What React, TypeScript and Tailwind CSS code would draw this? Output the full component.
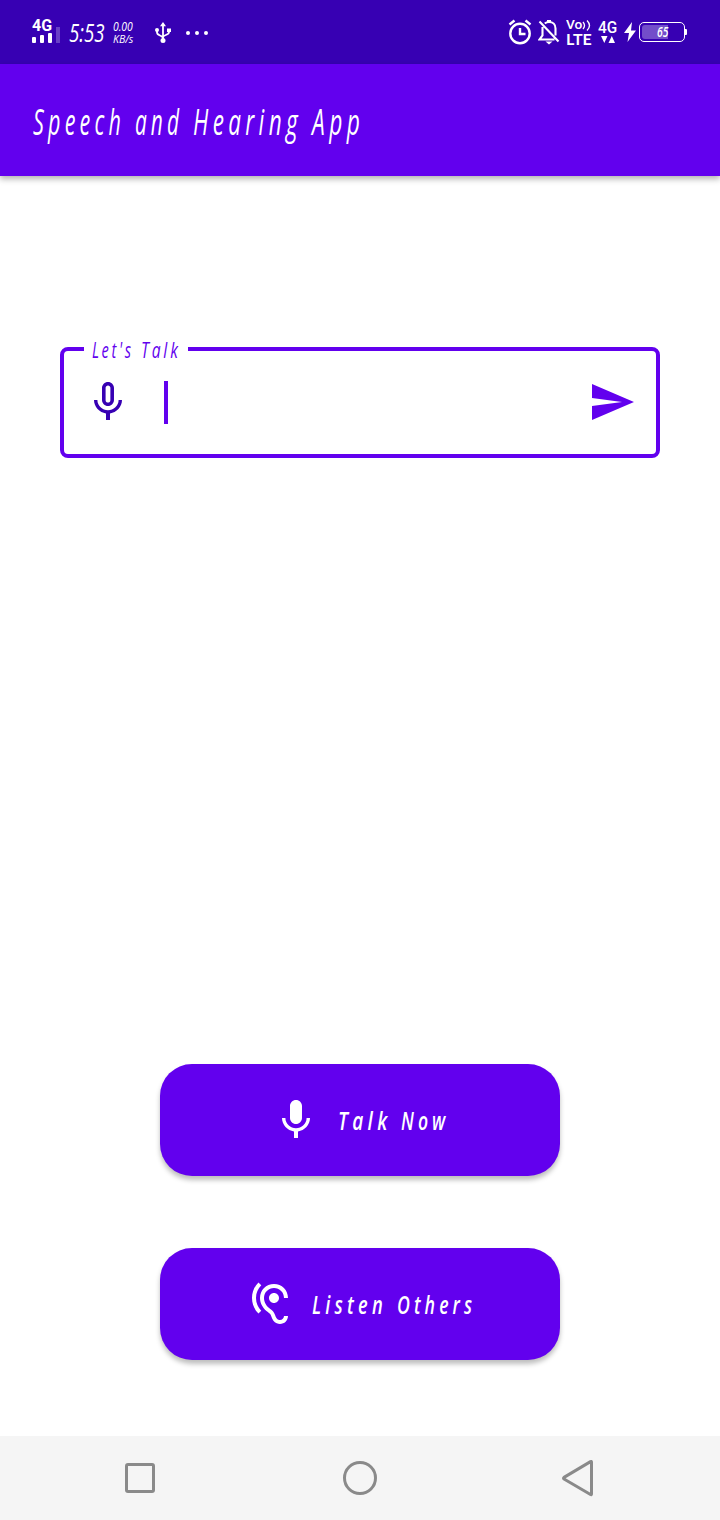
import { useLayoutEffect, useRef } from "react";
import type { ReactNode } from "react";

/** A word condensed horizontally so that it fills exactly the given width. */
function Word({ children, width, className = "" }: { children: string; width: number; className?: string }) {
  const ref = useRef<HTMLSpanElement>(null);
  useLayoutEffect(() => {
    const el = ref.current;
    if (!el) return;
    const spacing = parseFloat(getComputedStyle(el).letterSpacing) || 0;
    el.style.transform = `scaleX(${width / (el.offsetWidth - spacing)})`;
  }, [width]);
  return (
    <span className={`flex shrink-0 ${className}`} style={{ width }}>
      <span ref={ref} className="inline-block shrink-0 origin-left whitespace-nowrap">
        {children}
      </span>
    </span>
  );
}

function Icon({ d, className = "" }: { d: string; className?: string }) {
  return (
    <svg viewBox="0 0 24 24" fill="currentColor" className={`size-12 shrink-0 ${className}`}>
      <path d={d} />
    </svg>
  );
}

const MIC_NONE =
  "M12 14c1.66 0 2.99-1.34 2.99-3L15 5c0-1.66-1.34-3-3-3S9 3.34 9 5v6c0 1.66 1.34 3 3 3zm-1.2-9.1c0-.66.54-1.2 1.2-1.2.66 0 1.2.54 1.2 1.2l-.01 6.2c0 .66-.53 1.2-1.19 1.2-.66 0-1.2-.54-1.2-1.2V4.9zm6.5 6.1c0 3-2.54 5.1-5.3 5.1S6.7 14 6.7 11H5c0 3.41 2.72 6.23 6 6.72V21h2v-3.28c3.28-.48 6-3.3 6-6.72h-1.7z";
const MIC =
  "M12 14c1.66 0 2.99-1.34 2.99-3L15 5c0-1.66-1.34-3-3-3S9 3.34 9 5v6c0 1.66 1.34 3 3 3zm5.3-3c0 3-2.54 5.1-5.3 5.1S6.7 14 6.7 11H5c0 3.41 2.72 6.23 6 6.72V21h2v-3.28c3.28-.48 6-3.3 6-6.72h-1.7z";
const SEND = "M2.01 21L23 12 2.01 3 2 10l15 2-15 2z";
const HEARING =
  "M17 20c-.29 0-.56-.06-.76-.15-.71-.37-1.21-.88-1.71-2.38-.51-1.56-1.47-2.29-2.39-3-.79-.61-1.61-1.24-2.32-2.53C9.29 10.98 9 9.93 9 9c0-2.8 2.2-5 5-5s5 2.2 5 5h2c0-3.93-3.07-7-7-7S7 5.07 7 9c0 1.26.38 2.65 1.07 3.9.91 1.65 1.98 2.48 2.85 3.15.81.62 1.39 1.07 1.71 2.05.6 1.82 1.37 2.84 2.73 3.55.51.23 1.07.35 1.64.35 2.21 0 4-1.79 4-4h-2c0 1.1-.9 2-2 2zM7.64 2.64L6.22 1.22C4.23 3.21 3 5.96 3 9s1.23 5.79 3.22 7.78l1.41-1.41C6.01 13.74 5 11.49 5 9s1.01-4.74 2.64-6.36zM11.5 9c0 1.38 1.12 2.5 2.5 2.5s2.5-1.12 2.5-2.5-1.12-2.5-2.5-2.5-2.5 1.12-2.5 2.5z";

function StatusBar() {
  return (
    <header className="flex h-16 shrink-0 justify-between bg-[#3700b3] pr-[33px] pl-8 text-white">
      <div className="flex">
        <div className="flex w-7 flex-col pt-[18px]">
          <Word width={20} className="h-[15px] font-['Roboto',sans-serif] text-[16px] leading-[15px] font-bold not-italic">4G</Word>
          <div className="mt-[-6px] flex h-4 items-end gap-1">
            <span className="h-[6px] w-1 shrink-0 rounded-[1px] bg-white" />
            <span className="h-2 w-1 shrink-0 rounded-[1px] bg-white" />
            <span className="h-[10px] w-1 shrink-0 rounded-[1px] bg-white" />
            <span className="h-4 w-1 shrink-0 bg-white/25" />
          </div>
        </div>
        <Word width={36} className="ml-[9px] pt-[17px] text-[25px] leading-[30px] font-medium">5:53</Word>
        <div className="ml-2 flex flex-col pt-[20px] text-[12px] leading-[13px]">
          <Word width={20}>0.00</Word>
          <Word width={20} className="text-[10.5px]">KB/s</Word>
        </div>
        <svg viewBox="0 0 18 22" className="mt-[22px] ml-[21px] h-[22px] w-[18px]" fill="none" stroke="#fff" strokeWidth="1.8">
          <path d="M9 3v16M3 9v1.500c0 3.500 6 2.500 6 6M15 8v2c0 3.500-6 2.500-6 5.500" />
          <path d="M9 0l3 4.300H6zM13 6.500h4v3.500h-4z" fill="#fff" stroke="none" />
          <circle cx="3" cy="8" r="2" fill="#fff" stroke="none" />
          <circle cx="9" cy="18.500" r="2.500" fill="#fff" stroke="none" />
        </svg>
        <div className="mt-[31px] ml-[14px] flex gap-[5px]">
          <span className="size-1 rounded-full bg-white" />
          <span className="size-1 rounded-full bg-white" />
          <span className="size-1 rounded-full bg-white" />
        </div>
      </div>
      <div className="flex">
        <svg viewBox="0 0 24 26" className="mt-[19px] h-[26px] w-6" fill="none" stroke="#fff" strokeWidth="2.400">
          <circle cx="12" cy="14.500" r="9.700" />
          <path d="M12 9v6h5.500M1.500 5.500l5-4M22.500 5.500l-5-4" />
        </svg>
        <svg viewBox="0 0 22 26" className="mt-[19px] ml-[6px] h-[26px] w-[22px]" fill="none" stroke="#fff" strokeWidth="2.100">
          <path d="M1.500 2.500l19 20M6.800 4.500c1-.9 2.200-1.500 4.200-1.500 4 0 6.500 2.700 6.500 6.500v7M4.500 8v8.500l-3 4h15" />
          <path d="M7.500 22.500h7l-3.500 3zM9 1h4v2.500H9z" fill="#fff" stroke="none" />
        </svg>
        <div className="ml-[6px] flex flex-col pt-[18px] font-['Roboto',sans-serif] not-italic">
          <div className="flex h-[13px]">
            <Word width={16} className="text-[12px] leading-[14px] font-medium">Vo</Word>
            <svg viewBox="0 0 9 12" className="mt-[2px] h-3 w-[9px]" fill="none" stroke="#fff" strokeWidth="1.300">
              <path d="M1 2q3 3.500 0 7M5 .5q5 5 0 10" />
            </svg>
          </div>
          <Word width={26} className="font-['Lato',sans-serif] text-[16px] leading-[15px] font-bold">LTE</Word>
        </div>
        <div className="ml-[6px] flex flex-col items-center pt-[19px]">
          <Word width={19} className="font-['Roboto',sans-serif] text-[17px] leading-[17px] font-medium not-italic">4G</Word>
          <svg viewBox="0 0 14 7" className="h-[7px] w-[14px]" fill="#fff">
            <path d="M0 0h6.500L3.300 7zM7.500 7H14L10.800 0z" />
          </svg>
        </div>
        <svg viewBox="0 0 12 20" className="mt-[22px] ml-[7px] h-5 w-3" fill="#fff">
          <path d="M8 0L0 11h5L3.500 20 12 8.500H7z" />
        </svg>
        <div className="mt-[22px] ml-[3px] flex h-5 w-[46px] items-center rounded-[5px] border border-white p-[2px]">
          <div className="flex h-[14px] w-[26px] items-center justify-end rounded-l-[3px] bg-white/30">
            <Word width={11} className="text-[14px] leading-[14px] font-semibold">65</Word>
          </div>
        </div>
        <span className="mt-[29px] h-[6px] w-[2px] rounded-r-[1px] bg-white" />
      </div>
    </header>
  );
}

function ActionButton({ icon, className, children }: { icon: string; className: string; children: ReactNode }) {
  return (
    <button
      className={`flex h-28 w-[400px] items-start rounded-[32px] bg-[#6200ee] pt-8 text-[26px] leading-[49px] font-semibold tracking-[6px] text-white shadow-[0_4px_5px_rgba(0,0,0,0.26)] ${className}`}
    >
      <Icon d={icon} />
      {children}
    </button>
  );
}

export default function App() {
  return (
    <div className="flex h-[1520px] w-[720px] flex-col overflow-hidden bg-white font-['Open_Sans','Noto_Sans',sans-serif] italic">
      <StatusBar />
      <div className="flex h-28 shrink-0 gap-[14px] bg-[#6200ee] pt-[33px] pl-[33px] text-[36px] leading-[50px] font-normal tracking-[7px] text-white shadow-[0_3px_6px_rgba(0,0,0,0.3)]">
        <Word width={88}>Speech</Word>
        <Word width={44}>and</Word>
        <Word width={105}>Hearing</Word>
        <Word width={48}>App</Word>
      </div>
      <main className="flex grow flex-col items-center">
        <div className="relative mt-[171px] flex h-[111px] w-[600px] shrink-0 items-start justify-between rounded-[8px] border-4 border-[#6200ee] px-5 pt-[27px]">
          <div className="absolute top-[-18px] left-5 flex h-8 w-[104px] gap-[10px] bg-white pl-2 text-[22px] leading-[32px] font-normal tracking-[4px] text-[#6200ee]">
            <Word width={39}>Let's</Word>
            <Word width={37}>Talk</Word>
          </div>
          <div className="flex">
            <Icon d={MIC_NONE} className="text-[#3700b3]" />
            <span className="mt-[3px] ml-8 h-[43px] w-1 bg-[#6200ee]" />
          </div>
          <Icon d={SEND} className="text-[#6200ee]" />
        </div>
        <div className="mt-[606px] flex flex-col gap-[72px]">
          <ActionButton icon={MIC} className="pl-28">
            <Word width={49} className="ml-[18px]">Talk</Word>
            <Word width={44} className="ml-[14px]">Now</Word>
          </ActionButton>
          <ActionButton icon={HEARING} className="pl-[86px]">
            <Word width={71} className="ml-[18px]">Listen</Word>
            <Word width={75} className="ml-[14px]">Others</Word>
          </ActionButton>
        </div>
      </main>
      <nav className="flex h-[84px] shrink-0 items-center justify-between bg-[#f5f5f5] pr-[127px] pl-[125px]">
        <span className="size-[30px] rounded-[3px] border-[3px] border-[#8a8a8a]" />
        <span className="ml-[3px] size-[34px] rounded-full border-[3px] border-[#8a8a8a]" />
        <svg viewBox="0 0 32 38" className="h-[38px] w-8" fill="none" stroke="#8a8a8a" strokeWidth="3" strokeLinejoin="round">
          <path d="M30.500 3v32q0 1-1 .5L3 20q-1-.8 0-1.600L29.500 2.600q1-.5 1 .4z" />
        </svg>
      </nav>
    </div>
  );
}
